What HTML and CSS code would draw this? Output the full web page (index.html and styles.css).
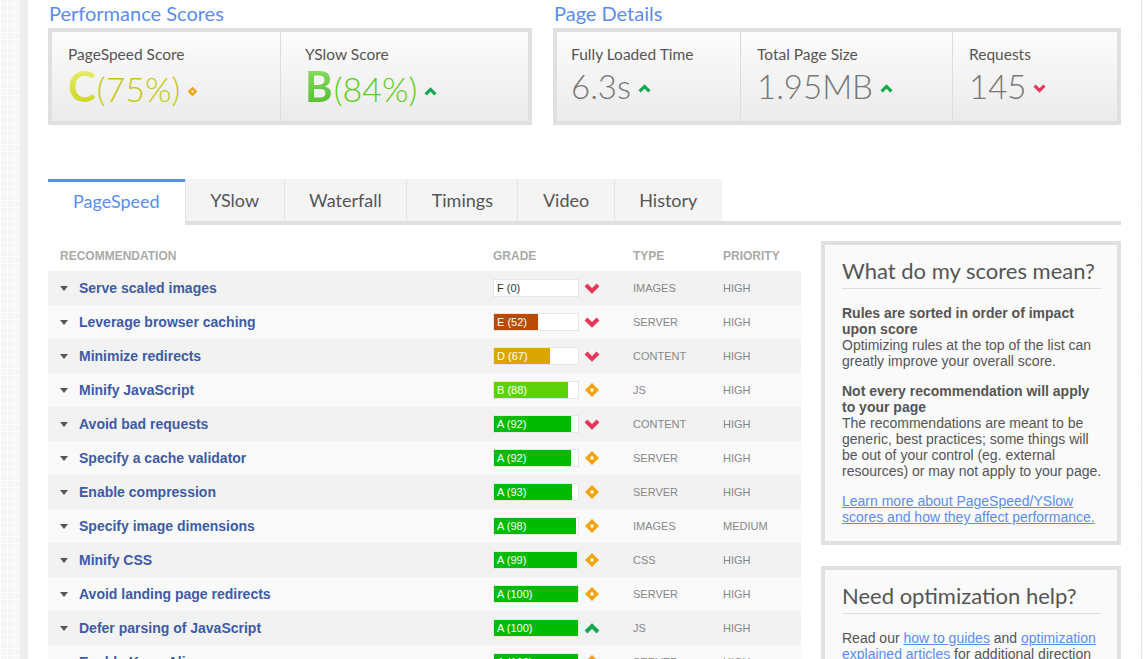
FILE: index.html
```html
<!DOCTYPE html>
<html lang="en">
<head>
  <meta charset="UTF-8" />
  <meta name="viewport" content="width=device-width, initial-scale=1.0"/>
  <title>Performance Report</title>
  <link rel="stylesheet" href="styles.css">
</head>
<body>
  <div class="page">
    <div class="summary">
      <div class="summary-block scores">
        <h2 class="section-title">Performance Scores</h2>
        <div class="panel">
          <div class="cell cell-pagespeed">
            <div class="cell-label">PageSpeed Score</div>
            <div class="cell-value grade-c"><span class="grade-letter">C</span>(75%)<svg class="icon-sm" width="11" height="11" viewBox="0 0 16 16"><path d="M8 1L15 8L8 15L1 8Z" fill="#f0a30a"/><rect x="6.5" y="6.5" width="3" height="3" fill="#fff"/></svg></div>
          </div>
          <div class="cell cell-yslow">
            <div class="cell-label">YSlow Score</div>
            <div class="cell-value grade-b"><span class="grade-letter">B</span>(84%)<svg class="icon-sm" width="13" height="9" viewBox="0 0 16 11"><path d="M2 9L8 3L14 9" stroke="#14a84e" stroke-width="4" fill="none"/></svg></div>
          </div>
        </div>
      </div>

      <div class="summary-block details">
        <h2 class="section-title">Page Details</h2>
        <div class="panel">
          <div class="cell cell-loaded">
            <div class="cell-label">Fully Loaded Time</div>
            <div class="cell-value metric">6.3s<svg class="icon-sm" width="13" height="9" viewBox="0 0 16 11"><path d="M2 9L8 3L14 9" stroke="#14a84e" stroke-width="4" fill="none"/></svg></div>
          </div>
          <div class="cell cell-size">
            <div class="cell-label">Total Page Size</div>
            <div class="cell-value metric">1.95MB<svg class="icon-sm" width="13" height="9" viewBox="0 0 16 11"><path d="M2 9L8 3L14 9" stroke="#14a84e" stroke-width="4" fill="none"/></svg></div>
          </div>
          <div class="cell">
            <div class="cell-label">Requests</div>
            <div class="cell-value metric">145<svg class="icon-sm" width="13" height="9" viewBox="0 0 16 11"><path d="M2 2L8 8L14 2" stroke="#e8385a" stroke-width="4" fill="none"/></svg></div>
          </div>
        </div>
      </div>
    </div>

    <div class="tabs">
      <div class="tab active">PageSpeed</div>
      <div class="tab">YSlow</div>
      <div class="tab">Waterfall</div>
      <div class="tab">Timings</div>
      <div class="tab">Video</div>
      <div class="tab">History</div>
    </div>

    <div class="content">
      <div class="rules">
        <div class="rules-head">
          <div class="col-name">Recommendation</div>
          <div>Grade</div>
          <div>Type</div>
          <div>Priority</div>
        </div>
        <div id="rule-rows"></div>
      </div>

      <div class="sidebar">
        <div class="side-box">
          <h3>What do my scores mean?</h3>
          <p><b>Rules are sorted in order of impact upon score</b><br>
          Optimizing rules at the top of the list can greatly improve your overall score.</p>
          <p><b>Not every recommendation will apply to your page</b><br>
          The recommendations are meant to be generic, best practices; some things will be out of your control (eg. external resources) or may not apply to your page.</p>
          <p><a href="#">Learn more about PageSpeed/YSlow scores and how they affect performance.</a></p>
        </div>
        <div class="side-box">
          <h3>Need optimization help?</h3>
          <p>Read our <a href="#">how to guides</a> and <a href="#">optimization explained articles</a> for additional direction on making your site faster.</p>
        </div>
      </div>
    </div>
  </div>

  <script>
    const rules = [
      ['Serve scaled images', 'F', 0, 'down', 'Images', 'High'],
      ['Leverage browser caching', 'E', 52, 'down', 'Server', 'High'],
      ['Minimize redirects', 'D', 67, 'down', 'Content', 'High'],
      ['Minify JavaScript', 'B', 88, 'same', 'JS', 'High'],
      ['Avoid bad requests', 'A', 92, 'down', 'Content', 'High'],
      ['Specify a cache validator', 'A', 92, 'same', 'Server', 'High'],
      ['Enable compression', 'A', 93, 'same', 'Server', 'High'],
      ['Specify image dimensions', 'A', 98, 'same', 'Images', 'Medium'],
      ['Minify CSS', 'A', 99, 'same', 'CSS', 'High'],
      ['Avoid landing page redirects', 'A', 100, 'same', 'Server', 'High'],
      ['Defer parsing of JavaScript', 'A', 100, 'up', 'JS', 'High'],
      ['Enable Keep-Alive', 'A', 100, 'same', 'Server', 'High']
    ];

    const icons = {
      down: '<svg width="16" height="11" viewBox="0 0 16 11"><path d="M2 2L8 8L14 2" stroke="#e8385a" stroke-width="4" fill="none"/></svg>',
      up: '<svg width="16" height="11" viewBox="0 0 16 11"><path d="M2 9L8 3L14 9" stroke="#14a84e" stroke-width="4" fill="none"/></svg>',
      same: '<svg width="16" height="16" viewBox="0 0 16 16"><path d="M8 1L15 8L8 15L1 8Z" fill="#f0a30a"/><rect x="6.5" y="6.5" width="3" height="3" fill="#fff"/></svg>'
    };

    const rows = document.getElementById('rule-rows');
    rules.forEach(([name, grade, score, trend, type, priority]) => {
      const row = document.createElement('div');
      row.className = 'rule-row';
      row.innerHTML =
        '<div class="col-name"><span class="caret"></span><a href="#">' + name + '</a></div>' +
        '<div class="col-grade">' +
          '<div class="bar"><div class="bar-fill grade-' + grade.toLowerCase() + '" style="width:' + score + '%"></div>' +
          '<span class="bar-text">' + grade + ' (' + score + ')</span></div>' +
          '<span class="trend">' + icons[trend] + '</span>' +
        '</div>' +
        '<div class="col-meta">' + type + '</div>' +
        '<div class="col-meta">' + priority + '</div>';
      rows.appendChild(row);
    });
  </script>
</body>
</html>
```

FILE: styles.css
```css
body {
  margin: 0;
  font-family: "Liberation Sans", Arial, sans-serif;
  color: #555;
  background-color: #f6f6f6;
  background-image:
    repeating-linear-gradient(90deg, #fdfdfd 0 1px, transparent 1px 7px),
    repeating-linear-gradient(0deg, #fdfdfd 0 1px, transparent 1px 7px);
  overflow: hidden;
}
.page {
  margin-left: 20px;
  width: 1073px;
  padding: 0 20px;
  min-height: 659px;
  background: #fff;
  border-left: 8px solid #eee;
  border-right: 1px solid #e6e6e6;
}

/* summary panels */
.summary {
  display: flex;
  gap: 21px;
}
.scores {
  width: 484px;
}
.details {
  width: 568px;
}
.section-title {
  margin: 0 0 2px 1px;
  font-family: Lato, "Open Sans", sans-serif;
  font-weight: normal;
  font-size: 20px;
  line-height: 26px;
  color: #5b8def;
}
.panel {
  display: flex;
  border: 4px solid #e0e0e0;
  background: linear-gradient(#fcfcfc, #ebebeb);
}
.cell {
  flex: 1;
  padding: 12px 16px 13px;
  border-left: 1px solid #dcdcdc;
}
.cell:first-child {
  border-left: 0;
}
.cell-pagespeed {
  flex: 0 0 228px;
  box-sizing: border-box;
}
.cell-yslow {
  padding-left: 24px;
}
.cell-loaded {
  flex: 0 0 183px;
  box-sizing: border-box;
  padding-left: 14px;
}
.cell-size {
  flex: 0 0 212px;
  box-sizing: border-box;
}
.cell-label {
  font-family: Lato, "Open Sans", sans-serif;
  font-size: 15.5px;
  line-height: 20px;
  color: #555;
}
.cell-value {
  height: 44px;
  font-family: Lato, "Open Sans", sans-serif;
  font-size: 34px;
  line-height: 44px;
  font-weight: 300;
  white-space: nowrap;
}
.cell-value .icon-sm {
  margin-left: 7px;
  vertical-align: middle;
  position: relative;
  top: -2px;
}
.grade-letter {
  font-size: 42px;
  font-weight: bold;
  margin-right: 1px;
  -webkit-background-clip: text;
  background-clip: text;
  color: transparent;
}
.grade-c {
  color: #c4c70f;
}
.grade-c .grade-letter {
  background-image: linear-gradient(#eef27a, #c6d310);
}
.grade-b {
  color: #5ccd1d;
}
.grade-b .grade-letter {
  background-image: linear-gradient(#93e06b, #4bb92a);
}
.metric {
  color: #777;
  font-size: 33px;
}

/* tabs */
.tabs {
  display: flex;
  align-items: flex-start;
  margin-top: 54px;
  border-bottom: 4px solid #e0e0e0;
}
.tab {
  height: 42px;
  line-height: 42px;
  padding: 0 24.5px;
  background: #f4f4f4;
  border-left: 1px solid #e3e3e3;
  font-family: Lato, "Open Sans", sans-serif;
  font-size: 18px;
  color: #555;
}
.tab.active {
  height: 43px;
  line-height: 39px;
  padding: 0 25px;
  margin-bottom: -4px;
  border-left: 0;
  border-top: 3px solid #5b8def;
  background: #fff;
  color: #5b8def;
}

/* content */
.content {
  display: flex;
  gap: 20px;
  margin-top: 16px;
}
.rules {
  width: 753px;
}
.rules-head,
.rule-row {
  display: grid;
  grid-template-columns: 445px 140px 90px 1fr;
  align-items: center;
}
.rules-head {
  height: 30px;
  font-size: 12px;
  font-weight: bold;
  text-transform: uppercase;
  color: #aaa;
}
.col-name {
  padding-left: 12px;
  display: flex;
  align-items: center;
}
.rule-row {
  height: 34px;
  background: #f2f2f2;
}
.rule-row:nth-child(even) {
  background: #f9f9f9;
}
.caret {
  width: 0;
  height: 0;
  margin-right: 11px;
  border-left: 4px solid transparent;
  border-right: 4px solid transparent;
  border-top: 5px solid #555;
}
.col-name a {
  font-size: 14px;
  font-weight: bold;
  color: #3d5ba6;
  text-decoration: none;
}
.col-grade {
  display: flex;
  align-items: center;
}
.bar {
  position: relative;
  width: 84px;
  height: 16px;
  border: 1px solid #e6e6e6;
  background: #fff;
}
.bar-fill {
  height: 100%;
}
.bar-fill.grade-a { background: #00bb00; }
.bar-fill.grade-b { background: #5dd20b; }
.bar-fill.grade-d { background: #dba500; }
.bar-fill.grade-e { background: #b94a00; }
.bar-text {
  position: absolute;
  left: 3px;
  top: 0;
  line-height: 16px;
  font-size: 11px;
  color: #fff;
}
.grade-f ~ .bar-text {
  color: #333;
}
.trend {
  display: flex;
  width: 16px;
  justify-content: center;
  margin-left: 5px;
}
.col-meta {
  font-size: 11px;
  text-transform: uppercase;
  color: #888;
}

/* sidebar */
.sidebar {
  width: 300px;
}
.side-box {
  border: 4px solid #e0e0e0;
  background: #fafafa;
  padding: 12px 12px 16px 17px;
  margin-bottom: 21px;
}
.side-box h3 {
  margin: 0 4px 16px 0;
  padding-bottom: 3px;
  border-bottom: 1px solid #ddd;
  font-family: Lato, "Open Sans", sans-serif;
  font-weight: normal;
  font-size: 22px;
  line-height: 28px;
  color: #555;
  white-space: nowrap;
}
.side-box p {
  margin: 0 0 14px;
  font-size: 14px;
  line-height: 16px;
  color: #555;
}
.side-box p:last-child {
  margin-bottom: 0;
}
.side-box a {
  color: #5b8def;
}
```
